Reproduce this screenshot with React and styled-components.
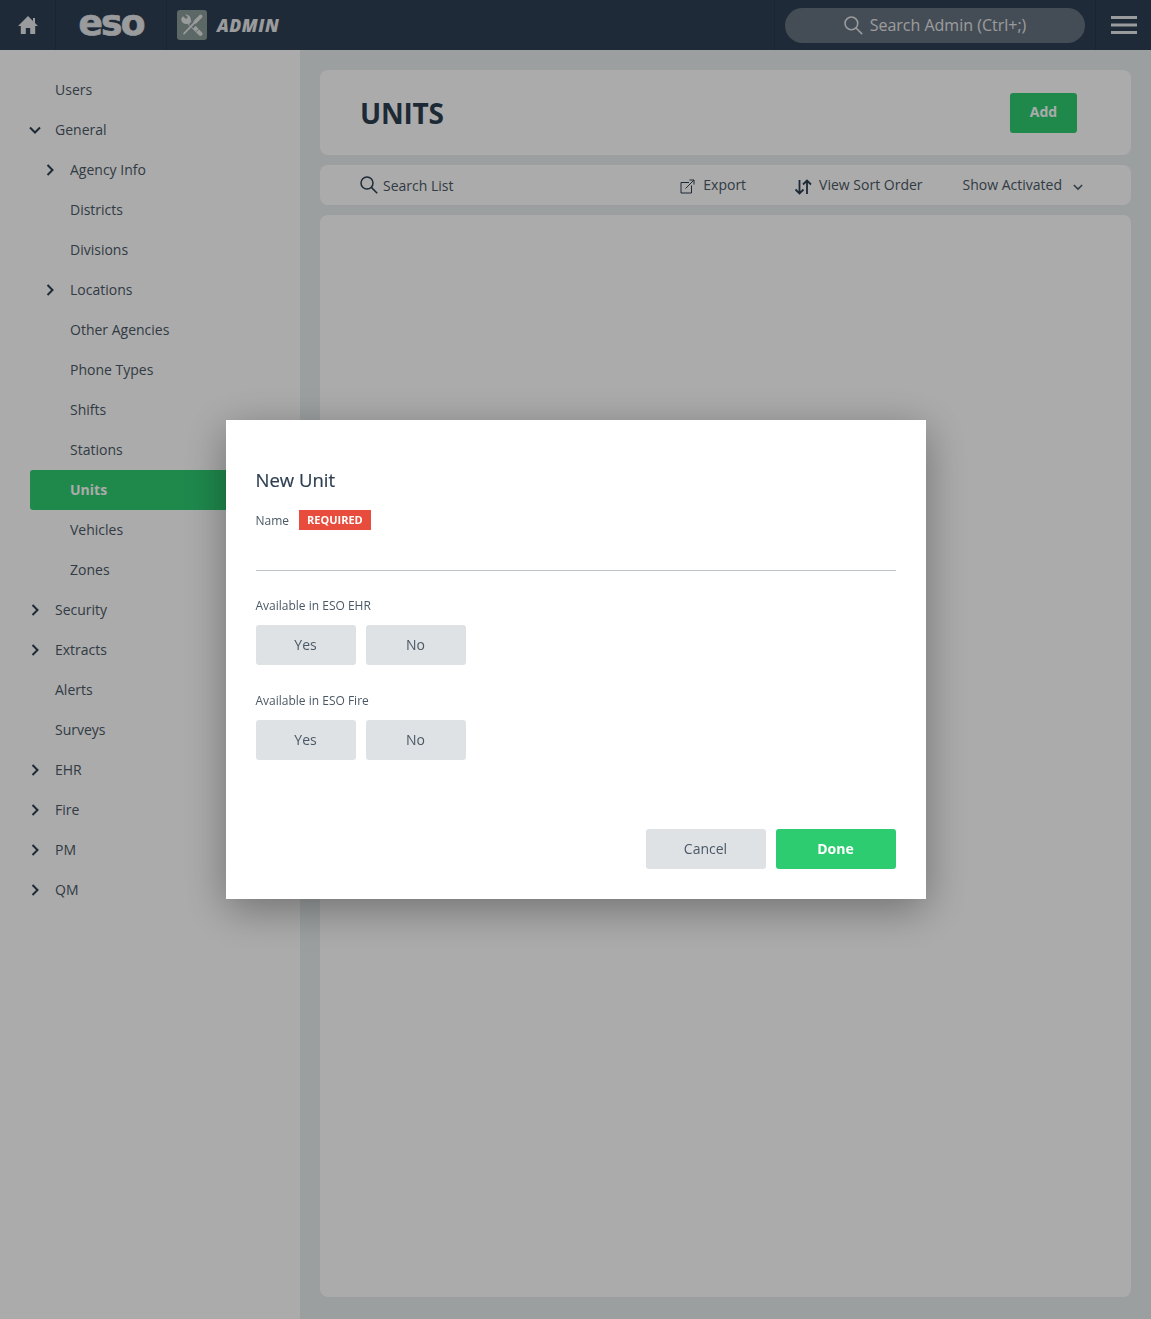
import React from "react";
import styled, { createGlobalStyle } from "styled-components";

const GlobalStyle = createGlobalStyle`
  html, body { margin: 0; padding: 0; height: 100%; overflow: hidden; }
  body { font-family: "Open Sans", "Noto Sans", sans-serif; color: #2c3e50; background: #e9eeef; }
  * { box-sizing: border-box; }
`;

const Page = styled.div`
  width: 100%;
  height: 100vh;
  display: flex;
  flex-direction: column;
`;

const TopBar = styled.header`
  height: 50px;
  flex: none;
  display: flex;
  align-items: stretch;
  background: #2f3f54;
`;

const BarCell = styled.div`
  width: ${({ $w }) => $w}px;
  flex: none;
  display: flex;
  align-items: center;
  justify-content: ${({ $start }) => ($start ? "flex-start" : "center")};
  padding-left: ${({ $pad }) => $pad || 0}px;
  border-left: 1px solid ${({ $left }) => ($left ? "#293849" : "transparent")};
  color: #e6e8ea;
`;

const BarSpacer = styled.div`
  flex: 1;
`;

const EsoLogo = styled.span`
  font-family: "DejaVu Sans", sans-serif;
  font-weight: 700;
  font-size: 36px;
  line-height: 1;
  letter-spacing: -1.8px;
  color: #e6e8ea;
  -webkit-text-stroke: 0.7px #e6e8ea;
  transform: translateY(-2px);
`;

const ToolTile = styled.div`
  width: 30px;
  height: 30px;
  border-radius: 3px;
  background: #8a9c97;
  display: flex;
  align-items: center;
  justify-content: center;
  margin-right: 10px;
`;

const AdminMark = styled.span`
  font-family: "Open Sans", sans-serif;
  font-size: 17.5px;
  font-weight: 800;
  font-style: italic;
  letter-spacing: 0.5px;
  color: #e6e8ea;
`;

const GlobalSearch = styled.div`
  width: 300px;
  height: 35px;
  margin: 1px 10px 0;
  padding-bottom: 1px;
  border-radius: 18px;
  background: #66727f;
  display: flex;
  align-items: center;
  justify-content: center;
  gap: 7px;
  font-size: 16px;
  color: #e6e8ea;
`;

const Body = styled.div`
  flex: 1;
  min-height: 0;
  display: flex;
`;

const Sidebar = styled.nav`
  width: 300px;
  flex: none;
  background: #fff;
  padding: 20px 0 0 30px;
`;

const NavRow = styled.div`
  height: 40px;
  display: flex;
  align-items: center;
  position: relative;
  padding-left: ${({ $level }) => ($level === 2 ? 40 : 25)}px;
  padding-bottom: 2px;
  font-size: 14px;
  font-weight: ${({ $active }) => ($active ? 700 : 400)};
  color: ${({ $active }) => ($active ? "#fff" : "#4a5866")};
  background: ${({ $active }) => ($active ? "#2ecc71" : "transparent")};
  border-radius: ${({ $active }) => ($active ? "3px 0 0 3px" : "0")};
`;

const NavCaret = styled.span`
  position: absolute;
  left: ${({ $level }) => ($level === 2 ? 14 : -1)}px;
  top: 50%;
  width: 12px;
  height: 12px;
  margin-top: -6px;
  display: flex;
  color: #2c3e50;
`;

const Main = styled.main`
  flex: 1;
  min-width: 0;
  padding: 20px 20px 22px;
  display: flex;
  flex-direction: column;
  gap: 10px;
`;

const Card = styled.section`
  background: #fff;
  border-radius: 8px;
`;

const TitleCard = styled(Card)`
  height: 85px;
  display: flex;
  align-items: center;
  justify-content: space-between;
  padding: 0 54px 0 40px;
`;

const Title = styled.h1`
  margin: 0;
  font-size: 28px;
  font-weight: 700;
  letter-spacing: -0.2px;
  color: #2c3e50;
`;

const AddButton = styled.button`
  width: 67px;
  height: 40px;
  border: 0;
  padding: 0 0 2px;
  border-radius: 3px;
  background: #2ecc71;
  color: #fff;
  font: 700 14px "Open Sans", sans-serif;
`;

const ToolbarCard = styled(Card)`
  height: 40px;
  display: flex;
  align-items: center;
  padding: 0 48px 0 40px;
  font-size: 14px;
  color: #4a5866;
`;

const ListSearch = styled.div`
  display: flex;
  align-items: center;
  gap: 5px;
  flex: 1;
`;

const ToolAction = styled.div`
  display: flex;
  align-items: center;
  gap: ${({ $gap }) => $gap}px;
  margin-left: ${({ $ml }) => $ml}px;
  padding-bottom: 2px;
  svg { flex: none; margin-top: 5px; }
`;

const ListCard = styled(Card)`
  flex: 1;
`;

const Backdrop = styled.div`
  position: fixed;
  inset: 0;
  background: rgba(0, 0, 0, 0.33);
  display: flex;
  align-items: center;
  justify-content: center;
`;

const Modal = styled.div`
  width: 700px;
  height: 479px;
  background: #fff;
  padding: 49px 30px 30px;
  display: flex;
  flex-direction: column;
  box-shadow: 0 10px 40px rgba(0, 0, 0, 0.35);
`;

const ModalTitle = styled.h2`
  margin: 0;
  font-size: 18.5px;
  font-weight: 400;
  line-height: 22px;
  color: #2c3e50;
  -webkit-text-stroke: 0.2px #2c3e50;
`;

const NameRow = styled.div`
  display: flex;
  align-items: center;
  gap: 10px;
  margin-top: 19px;
  height: 20px;
  font-size: 12px;
  color: #4a5866;
`;

const Required = styled.span`
  height: 20px;
  padding: 0 8px 2px;
  display: flex;
  align-items: center;
  background: #e74c3c;
  color: #fff;
  font-size: 11px;
  font-weight: 700;
`;

const NameInput = styled.div`
  height: 41px;
  border-bottom: 1px solid #bdc3c7;
`;

const FieldLabel = styled.div`
  margin-top: ${({ $mt }) => $mt}px;
  font-size: 12px;
  line-height: 20px;
  color: #4a5866;
`;

const Choices = styled.div`
  display: flex;
  gap: 10px;
  margin-top: 9px;
`;

const ChoiceButton = styled.button`
  width: 100px;
  height: 40px;
  border: 0;
  padding: 0 0 2px;
  border-radius: 3px;
  background: #dee2e5;
  color: #4a5866;
  font: 400 14px "Open Sans", sans-serif;
`;

const Footer = styled.div`
  margin-top: auto;
  display: flex;
  justify-content: flex-end;
  gap: 10px;
`;

const FooterButton = styled.button`
  width: 120px;
  height: 40px;
  border: 0;
  padding: 0 0 2px;
  border-radius: 3px;
  background: ${({ $primary }) => ($primary ? "#2ecc71" : "#dee2e5")};
  color: ${({ $primary }) => ($primary ? "#fff" : "#4a5866")};
  font: ${({ $primary }) => ($primary ? 700 : 400)} 14px "Open Sans", sans-serif;
`;

const navItems = [
  { label: "Users", level: 1 },
  { label: "General", level: 1, caret: "down" },
  { label: "Agency Info", level: 2, caret: "right" },
  { label: "Districts", level: 2 },
  { label: "Divisions", level: 2 },
  { label: "Locations", level: 2, caret: "right" },
  { label: "Other Agencies", level: 2 },
  { label: "Phone Types", level: 2 },
  { label: "Shifts", level: 2 },
  { label: "Stations", level: 2 },
  { label: "Units", level: 2, active: true },
  { label: "Vehicles", level: 2 },
  { label: "Zones", level: 2 },
  { label: "Security", level: 1, caret: "right" },
  { label: "Extracts", level: 1, caret: "right" },
  { label: "Alerts", level: 1 },
  { label: "Surveys", level: 1 },
  { label: "EHR", level: 1, caret: "right" },
  { label: "Fire", level: 1, caret: "right" },
  { label: "PM", level: 1, caret: "right" },
  { label: "QM", level: 1, caret: "right" },
];

const SearchIcon = ({ size = 18, color = "currentColor" }) => (
  <svg width={size} height={size} viewBox="0 0 18 18" fill="none" stroke={color} strokeWidth="1.5">
    <circle cx="7" cy="7" r="6" />
    <path d="M11.4 11.4L17.2 17.2" />
  </svg>
);

const HomeIcon = () => (
  <svg width="20" height="20" viewBox="0 0 20 20" fill="#e6e8ea">
    <path d="M10 1L15 6V3H17V8L20 11H17.2V19H12.2V13H7.8V19H2.8V11H0Z" />
  </svg>
);

const ToolsIcon = () => (
  <svg width="24" height="24" viewBox="0 0 24 24" fill="none" strokeLinecap="round">
    <path d="M3 3.2L6 6L8 4.2L5.2 1.6A4.8 4.8 0 0 1 10.6 7.6L22 19.4A2 2 0 0 1 19 22.2L7.4 10.8A4.8 4.8 0 0 1 1.4 5.2Z" fill="#e6e8ea" />
    <path d="M16.6 18.2L18.4 16.6" stroke="#8a9c97" strokeWidth="1" />
    <path d="M19 5L11 13.4" stroke="#8a9c97" strokeWidth="6" strokeLinecap="butt" />
    <path d="M20.6 3.4L15.4 8.8" stroke="#e6e8ea" strokeWidth="3.6" />
    <path d="M15 9.2L4 20.6" stroke="#e6e8ea" strokeWidth="1.8" />
  </svg>
);

const MenuIcon = () => (
  <svg width="26" height="18" viewBox="0 0 26 18" fill="#e6e8ea">
    <rect y="0" width="26" height="3" />
    <rect y="7.5" width="26" height="3" />
    <rect y="15" width="26" height="3" />
  </svg>
);

const ChevronRight = () => (
  <svg width="12" height="12" viewBox="0 0 12 12" fill="none" stroke="currentColor" strokeWidth="2">
    <path d="M3.5 1L8.5 6L3.5 11" />
  </svg>
);

const ChevronDown = ({ size = 12, weight = 2 }) => (
  <svg width={size} height={size} viewBox="0 0 12 12" fill="none" stroke="currentColor" strokeWidth={weight}>
    <path d="M1 3.5L6 8.5L11 3.5" />
  </svg>
);

const ExportIcon = () => (
  <svg width="15" height="15" viewBox="0 0 15 15" fill="none" stroke="#2c3e50" strokeWidth="1">
    <path d="M9 3.5H1V14H11.5V6.5" />
    <path d="M5.5 9.5L14 1M9.5 1H14V5.5" />
  </svg>
);

const SortIcon = () => (
  <svg width="18" height="16" viewBox="0 0 18 16" fill="none" stroke="#2c3e50" strokeWidth="1.8">
    <path d="M5.5 1V14.5M1.5 10.5L5.5 14.5L9.5 10.5" />
    <path d="M13 15V1.5M9 5.5L13 1.5L17 5.5" />
  </svg>
);

export default function App() {
  return (
    <Page>
      <GlobalStyle />
      <TopBar>
        <BarCell $w={55}><HomeIcon /></BarCell>
        <BarCell $w={111} $left><EsoLogo>eso</EsoLogo></BarCell>
        <BarCell $w={133} $left $start $pad={10}>
          <ToolTile><ToolsIcon /></ToolTile>
          <AdminMark>ADMIN</AdminMark>
        </BarCell>
        <BarSpacer />
        <BarCell $w={321} $left $start>
          <GlobalSearch><SearchIcon size={19} color="#e6e8ea" />Search Admin (Ctrl+;)</GlobalSearch>
        </BarCell>
        <BarCell $w={56} $left><MenuIcon /></BarCell>
      </TopBar>
      <Body>
        <Sidebar>
          {navItems.map((item) => (
            <NavRow key={item.label} $level={item.level} $active={item.active}>
              {item.caret && (
                <NavCaret $level={item.level}>
                  {item.caret === "down" ? <ChevronDown /> : <ChevronRight />}
                </NavCaret>
              )}
              {item.label}
            </NavRow>
          ))}
        </Sidebar>
        <Main>
          <TitleCard>
            <Title>UNITS</Title>
            <AddButton>Add</AddButton>
          </TitleCard>
          <ToolbarCard>
            <ListSearch><SearchIcon size={18} color="#2c3e50" />Search List</ListSearch>
            <ToolAction $gap={8}><ExportIcon />Export</ToolAction>
            <ToolAction $gap={7} $ml={48}><SortIcon />View Sort Order</ToolAction>
            <ToolAction $gap={11} $ml={40}>Show Activated<ChevronDown size={10} weight={1.8} /></ToolAction>
          </ToolbarCard>
          <ListCard />
        </Main>
      </Body>
      <Backdrop>
        <Modal>
          <ModalTitle>New Unit</ModalTitle>
          <NameRow>Name<Required>REQUIRED</Required></NameRow>
          <NameInput />
          <FieldLabel $mt={25}>Available in ESO EHR</FieldLabel>
          <Choices>
            <ChoiceButton>Yes</ChoiceButton>
            <ChoiceButton>No</ChoiceButton>
          </Choices>
          <FieldLabel $mt={26}>Available in ESO Fire</FieldLabel>
          <Choices>
            <ChoiceButton>Yes</ChoiceButton>
            <ChoiceButton>No</ChoiceButton>
          </Choices>
          <Footer>
            <FooterButton>Cancel</FooterButton>
            <FooterButton $primary>Done</FooterButton>
          </Footer>
        </Modal>
      </Backdrop>
    </Page>
  );
}
